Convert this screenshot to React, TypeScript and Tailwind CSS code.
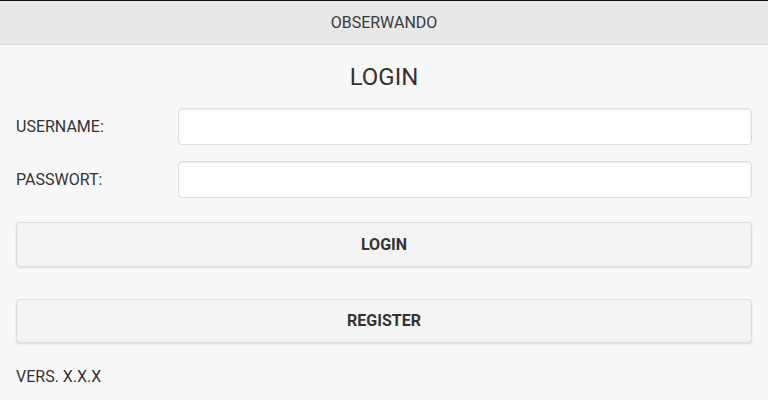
import React from "react";

export default function App() {
  return (
    <div className="w-[768px] h-[400px] overflow-hidden bg-[#f8f8f8] text-[#333]" style={{ fontFamily: "Roboto, 'Liberation Sans', sans-serif" }}>
      <div className="h-[45px] bg-[#e8e8e8] border-t border-t-[#111] border-b border-b-[#d8d8d8] flex items-center justify-center text-[16px] text-[#3a3a3a] pt-[1px]">
        OBSERWANDO
      </div>
      <div className="px-[16px]">
        <div className="h-[63px] flex items-center justify-center text-[24px] text-[#333] pt-[1px]">LOGIN</div>
        <div className="flex items-center h-[37px]">
          <div className="w-[162px] text-[16px] text-[#333]">USERNAME:</div>
          <input className="flex-1 h-[37px] bg-white border border-[#dcdcdc] rounded-[4px] shadow-[inset_0_1px_2px_rgba(0,0,0,0.08)] w-[574px]" />
        </div>
        <div className="flex items-center h-[37px] mt-[16px]">
          <div className="w-[162px] text-[16px] text-[#333]">PASSWORT:</div>
          <input type="password" className="flex-1 h-[37px] bg-white border border-[#dcdcdc] rounded-[4px] shadow-[inset_0_1px_2px_rgba(0,0,0,0.08)] w-[574px]" />
        </div>
        <button className="mt-[24px] w-[736px] h-[45px] bg-[#f4f4f4] border border-[#dedede] rounded-[4px] shadow-[0_1px_2px_rgba(0,0,0,0.12)] text-[16px] font-bold text-[#333] flex items-center justify-center">
          LOGIN
        </button>
        <button className="mt-[32px] w-[736px] h-[44px] bg-[#f4f4f4] border border-[#dedede] rounded-[4px] shadow-[0_1px_2px_rgba(0,0,0,0.12)] text-[16px] font-bold text-[#333] flex items-center justify-center">
          REGISTER
        </button>
        <div className="mt-[22px] text-[16px] text-[#333]">VERS. X.X.X</div>
      </div>
    </div>
  );
}
